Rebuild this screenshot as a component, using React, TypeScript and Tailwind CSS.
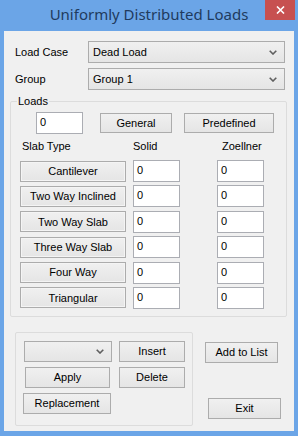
import React from 'react';

const btn =
  'flex items-center justify-center border border-[#acacac] bg-linear-to-b from-[#f0f0f0] to-[#e5e5e5] text-black font-normal';

function Chevron() {
  return (
    <svg width="8" height="5" viewBox="0 0 8 5">
      <path d="M0.7 0.7 L4 4 L7.3 0.7" fill="none" stroke="#5f5f5f" strokeWidth="1.6" />
    </svg>
  );
}

function Combo({ value, className }: { value?: string; className: string }) {
  return (
    <div className={`flex items-center justify-between border border-[#acacac] bg-linear-to-b from-[#f0f0f0] to-[#e5e5e5] pl-[4px] pr-[7px] ${className}`}>
      <span>{value}</span>
      <Chevron />
    </div>
  );
}

function TextBox({ className = '' }: { className?: string }) {
  return (
    <div className={`w-[47px] h-[22px] border border-[#abadb3] bg-white pl-[3px] pt-[3px] leading-[13px] ${className}`}>
      0
    </div>
  );
}

const slabTypes = ['Cantilever', 'Two Way Inclined', 'Two Way Slab', 'Three Way Slab', 'Four Way', 'Triangular'];

export default function App() {
  return (
    <div className="w-[298px] h-[436px] bg-[#6ba5e7] flex flex-col font-['Liberation_Sans',Arial,sans-serif] text-[11px] text-black">
      {/* title bar */}
      <div className="h-[31px] grid grid-cols-[1fr_auto_1fr]">
        <div />
        <div className="pt-[4px] text-[15px] leading-[20px] font-normal text-[#1f3b5e] font-['Segoe_UI','Noto_Sans',sans-serif]">
          Uniformly Distributed Loads
        </div>
        <div className="flex justify-end items-start pr-[3px]">
          <div className="w-[30px] h-[20px] bg-[#c75050] flex items-center justify-center">
            <svg width="9" height="8" viewBox="0 0 9 8">
              <path d="M1 0.5 L8 7.5 M8 0.5 L1 7.5" stroke="white" strokeWidth="1.6" />
            </svg>
          </div>
        </div>
      </div>

      {/* client area */}
      <div className="mx-[4px] mb-[5px] flex-1 bg-[#f0f0f0] flex flex-col">
        <div className="mt-[10px] flex items-center">
          <div className="w-[84px] pl-[11px]">Load Case</div>
          <Combo value="Dead Load" className="w-[197px] h-[22px]" />
        </div>
        <div className="mt-[5px] flex items-center">
          <div className="w-[84px] pl-[11px]">Group</div>
          <Combo value="Group 1" className="w-[197px] h-[22px]" />
        </div>

        <fieldset className="mt-[4px] ml-[6px] w-[277px] border border-[#dcdcdc] rounded-[2px] pb-[7px]">
          <legend className="ml-[6px] px-[1px] leading-[14px]">Loads</legend>
          <div className="mt-[4px] flex items-center">
            <TextBox className="ml-[25px] h-[21px]" />
            <button className={`${btn} ml-[17px] w-[72px] h-[20px]`}>General</button>
            <button className={`${btn} ml-[12px] w-[90px] h-[20px]`}>Predefined</button>
          </div>

          <div className="mt-[6px] ml-[9px] grid grid-cols-[113px_84px_47px] leading-[13px]">
            <div className="pl-[2px]">Slab Type</div>
            <div>Solid</div>
            <div className="pl-[5px]">Zoellner</div>
          </div>

          <div className="mt-[7px] ml-[9px] grid grid-cols-[113px_84px_47px] gap-y-[3.4px]">
            {slabTypes.map((s) => (
              <React.Fragment key={s}>
                <div className="flex items-center">
                  <button className={`${btn} w-[106px] h-[21px] border-[#9c9c9c] shadow-[inset_0_0_0_1px_#f4f4f4]`}>{s}</button>
                </div>
                <TextBox />
                <TextBox />
              </React.Fragment>
            ))}
          </div>
        </fieldset>

        <div className="mt-[15px] flex items-start">
          <fieldset className="ml-[11px] w-[178px] h-[94px] border border-[#dcdcdc] rounded-[2px] pt-[8px]">
            <div className="flex items-center">
              <Combo className="ml-[8px] w-[88px] h-[21px]" />
              <button className={`${btn} ml-[7px] w-[66px] h-[21px]`}>Insert</button>
            </div>
            <div className="mt-[5px] flex items-center">
              <button className={`${btn} ml-[9px] w-[85px] h-[21px]`}>Apply</button>
              <button className={`${btn} ml-[9px] w-[66px] h-[21px]`}>Delete</button>
            </div>
            <div className="mt-[5px] flex items-center">
              <button className={`${btn} ml-[7px] w-[88px] h-[21px]`}>Replacement</button>
            </div>
          </fieldset>

          <div className="ml-[12px] pt-[10px] flex flex-col items-start">
            <button className={`${btn} w-[73px] h-[21px]`}>Add to List</button>
            <button className={`${btn} mt-[35px] ml-[3px] w-[73px] h-[21px] border-[#3c7fb1]`}>Exit</button>
          </div>
        </div>
      </div>
    </div>
  );
}
